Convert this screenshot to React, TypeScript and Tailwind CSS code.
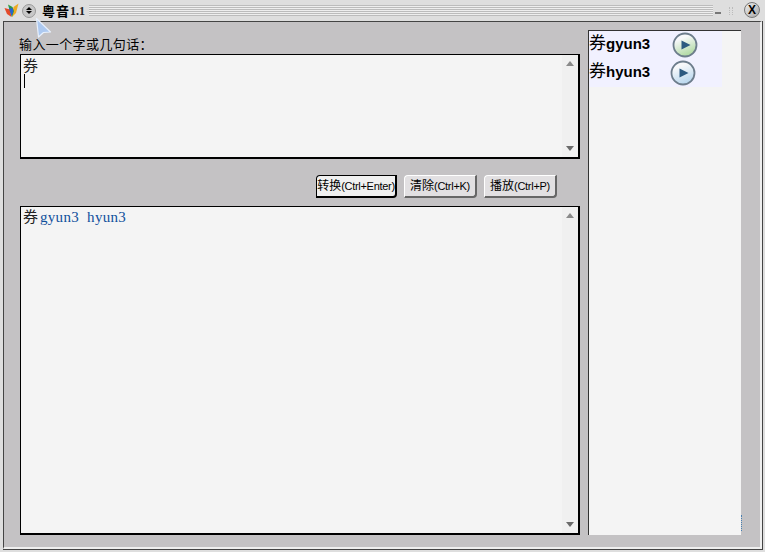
const cjk = '"Liberation Sans", "Noto Sans CJK SC", sans-serif';

function ScrollTrack() {
  return (
    <div className="flex w-[16px] shrink-0 flex-col items-center justify-between bg-[#f0f0f0] py-[6px]">
      <div className="h-0 w-0 border-x-[4px] border-b-[5px] border-x-transparent border-b-[#8a8a8a]"></div>
      <div className="h-0 w-0 border-x-[4px] border-t-[5px] border-x-transparent border-t-[#6a6a6a]"></div>
    </div>
  );
}

function Btn({ cn, keys, w, active }: { cn: string; keys: string; w: string; active?: boolean }) {
  return (
    <div
      className={`flex h-[23px] items-center justify-center whitespace-nowrap rounded-tl-[4px] rounded-br-[4px] text-[12px] text-black ${w} ${
        active
          ? "border border-b-2 border-r-2 border-black bg-[#f0f0f0]"
          : "border border-b-2 border-r-2 border-t-white border-l-white border-b-[#666] border-r-[#666] bg-[#e2e0e2]"
      }`}
    >
      {cn}
      <span className="text-[11px] tracking-[-0.3px]">{keys}</span>
    </div>
  );
}

function PlayIcon({ id, tint }: { id: string; tint: string }) {
  return (
    <svg width="26" height="26" viewBox="0 0 26 26">
      <defs>
        <linearGradient id={id} x1="0.3" y1="0" x2="0.7" y2="1">
          <stop offset="0.2" stopColor="#f7f8fa" />
          <stop offset="1" stopColor={tint} />
        </linearGradient>
      </defs>
      <circle cx="13" cy="13" r="11.5" fill={`url(#${id})`} stroke="#6d7d8c" strokeWidth="1.8" />
      <path d="M9.5 8.5 L18.5 13 L9.5 17.5 Z" fill="#2c5a80" />
    </svg>
  );
}

function Logo() {
  return (
    <svg width="15" height="15" viewBox="0 0 15 15">
      <path d="M0.5 5 L6 6.5 L7.5 14 L3 11 Z" fill="#e44a2a" />
      <path d="M14.5 0.5 L9.5 4 L8 14 L12 10 Z" fill="#eeaa22" />
      <path d="M4 1.5 L8.5 4 L10 8 L8 14 L5.5 7 Z" fill="#2f9a40" />
      <path d="M5 5 L9 5.5 L9 9.5 L7.5 13 Z" fill="#2a62d0" />
    </svg>
  );
}

function Cursor() {
  return (
    <svg className="absolute left-[35px] top-[17px]" width="17" height="21" viewBox="0 0 17 21">
      <path d="M1.5 1.5 L15.5 15 L8.5 15.5 L3.5 20 Z" fill="#adc9f0" stroke="#e8f0fc" strokeWidth="1.2" strokeLinejoin="round" />
    </svg>
  );
}

const stripes = "bg-[repeating-linear-gradient(to_bottom,#bcbcbc_0,#bcbcbc_1px,#eeeeee_1px,#eeeeee_2px)]";

export default function App() {
  return (
    <div className="relative flex h-[552px] w-[765px] flex-col overflow-hidden bg-[#dedede]" style={{ fontFamily: cjk }}>
      {/* title bar */}
      <div className="flex h-[21px] shrink-0 items-center pl-[4px] pr-[5px]">
        <Logo />
        <div className="ml-[3px] flex h-[14px] w-[14px] flex-col items-center justify-center gap-[1px] rounded-full border border-[#999] bg-[#c8c8c8]">
          <div className="h-0 w-0 border-x-[3px] border-b-[3px] border-x-transparent border-b-black"></div>
          <div className="h-0 w-0 border-x-[3px] border-t-[3px] border-x-transparent border-t-black"></div>
        </div>
        <span className="ml-[6px] whitespace-nowrap text-[13px] font-bold leading-none tracking-[1px] text-black" style={{ fontFamily: '"Noto Sans CJK SC", sans-serif' }}>
          粤音
        </span>
        <span className="whitespace-nowrap text-[12px] font-bold leading-none text-[#222]" style={{ fontFamily: '"Liberation Serif", serif' }}>
          1.1
        </span>
        <div className={`ml-[4px] h-[11px] w-[624px] ${stripes}`}></div>
        <span className="ml-[2px] mt-[4px] h-[2px] w-[6px] bg-[#777]"></span>
        <div className="ml-[8px] h-[8px] w-[4px] border-x border-dotted border-[#bbb]"></div>
        <div className="mb-[2px] ml-auto flex h-[16px] w-[16px] items-center justify-center rounded-full border border-[#777] bg-[linear-gradient(135deg,#eeeeee,#a8a8a8)] text-[12px] font-bold leading-none text-black">
          X
        </div>
      </div>

      {/* window frame */}
      <div className="mb-[2px] ml-[3px] mr-[2px] flex min-h-0 flex-1 border-b border-r border-[#444]">
        <div className="flex min-w-0 flex-1 border-b-2 border-l border-r-2 border-t border-b-[#efefef] border-l-[#444] border-r-[#efefef] border-t-[#444] bg-[#c4c2c4] pb-[12px] pl-[16px] pr-[19px] pt-[8px]">
          <div className="flex w-[560px] shrink-0 flex-col">
            <div className="-ml-[1px] mt-[6px] h-[18px] text-[13px] leading-[18px] tracking-[0.4px] text-black">输入一个字或几句话：</div>
            <div className="flex h-[105px] border border-b-2 border-r-2 border-black bg-[#f4f4f4]">
              <div className="flex-1 pl-[2px]">
                <div className="text-[15px] leading-[19px] text-[#222]" style={{ fontFamily: '"Noto Sans CJK SC", sans-serif' }}>券</div>
                <div className="ml-[1px] h-[14px] w-px bg-black"></div>
              </div>
              <ScrollTrack />
            </div>
            <div className="mt-[16px] flex justify-end gap-[7px] pr-[23px]">
              <Btn cn="转换" keys="(Ctrl+Enter)" w="w-[81px]" active />
              <Btn cn="清除" keys="(Ctrl+K)" w="w-[73px]" />
              <Btn cn="播放" keys="(Ctrl+P)" w="w-[73px]" />
            </div>
            <div className="mt-[8px] flex min-h-0 flex-1 border border-b-2 border-r-2 border-black bg-[#f4f4f4]">
              <div className="flex-1 pl-[2px] text-[15px] leading-[20px]" style={{ fontFamily: '"Liberation Serif", "Noto Sans CJK SC", serif' }}>
                <span className="text-[#222]">券</span>
                <span className="ml-[2px] whitespace-pre tracking-[0.3px] text-[#0f4f9c]">gyun3  hyun3</span>
              </div>
              <ScrollTrack />
            </div>
          </div>

          <div className="relative ml-[8px] flex-1 border-l border-t border-[#333] bg-[#f4f4f4]">
            <div className="w-[133px] bg-[#f1f1ff]">
              <div className="flex h-[28px] items-center">
                <span className="w-[83px] whitespace-nowrap pb-[3px] text-[15px] font-bold leading-none text-black">
                  <span className="text-[17px] font-normal">券</span>gyun3
                </span>
                <PlayIcon id="playG" tint="#a9d69a" />
              </div>
              <div className="flex h-[28px] items-center">
                <span className="w-[81px] whitespace-nowrap pb-[3px] text-[15px] font-bold leading-none text-black">
                  <span className="text-[17px] font-normal">券</span>hyun3
                </span>
                <PlayIcon id="playB" tint="#b3d4ec" />
              </div>
            </div>
            <div className="absolute bottom-[4px] right-[-1px] h-[16px] w-px border-r border-dotted border-[#4a7fb0]"></div>
          </div>
        </div>
      </div>
      <Cursor />
    </div>
  );
}
